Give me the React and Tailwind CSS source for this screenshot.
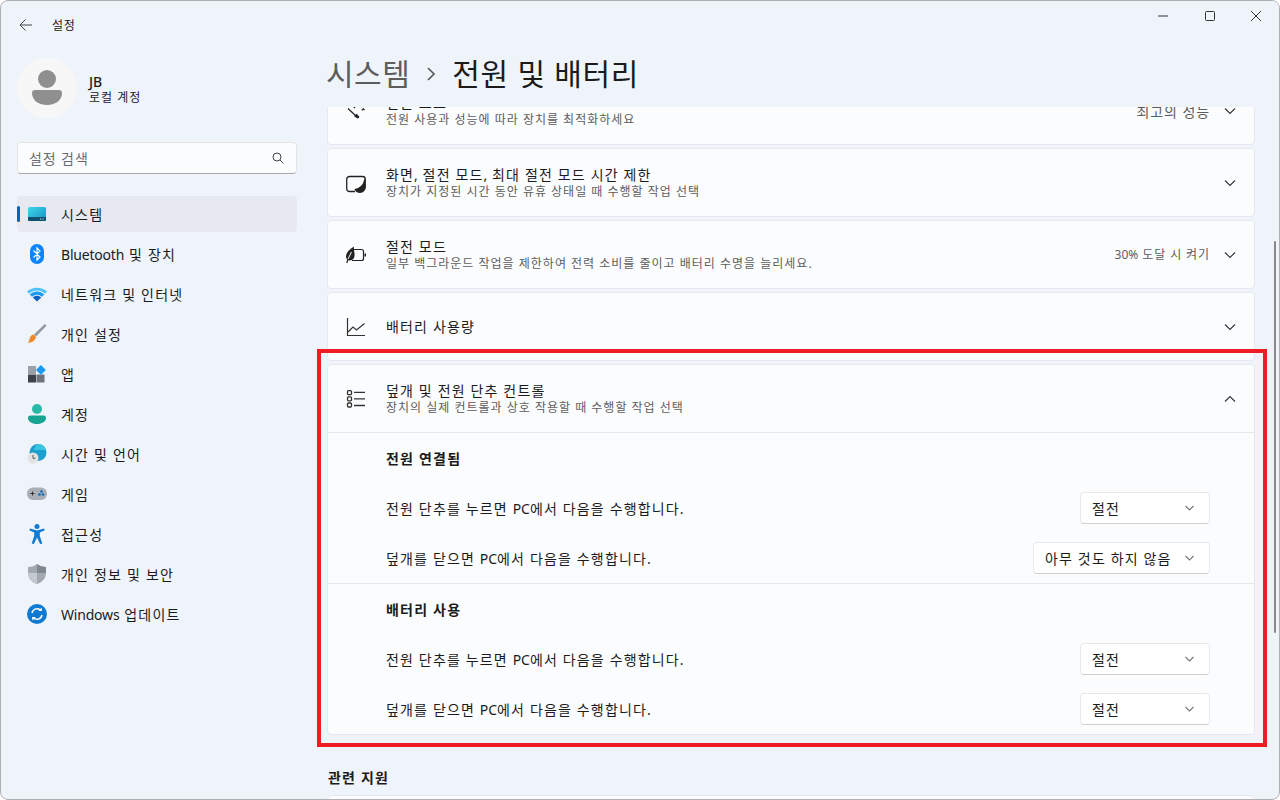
import React from "react";

const F = { fontFamily: '"Noto Sans","Noto Sans CJK KR",sans-serif' };

const K = ({ t, ko = 1.15, en = 0 }) => (
  <>
    {t.split(/([A-Za-z0-9%.,]+)/).filter(Boolean).map((s, i) => (
      <span key={i} style={{ letterSpacing: /^[A-Za-z0-9%.,]+$/.test(s) ? en + "px" : ko + "px" }}>{s}</span>
    ))}
  </>
);

const Chev = ({ up, cls = "text-[#333]" }) => (
  <svg width="12" height="8" viewBox="0 0 12 8" className={cls} fill="none" stroke="currentColor" strokeWidth="1.1">
    <path d={up ? "M1 6.500 6 1.500l5 5" : "M1 1.500 6 6.500l5-5"} />
  </svg>
);

const SmallChev = () => (
  <svg width="9" height="6" viewBox="0 0 9 6" fill="none" stroke="#777" strokeWidth="1.1">
    <path d="M.5 1 4.500 5l4-4" />
  </svg>
);

const Sys = () => (
  <svg width="20" height="16" viewBox="0 0 20 16">
    <defs><linearGradient id="sg" x1="0" y1="0" x2="1" y2="1"><stop offset="0" stopColor="#3fd6ea" /><stop offset="1" stopColor="#1a8fc4" /></linearGradient></defs>
    <rect x="1" y="1" width="18" height="14" rx="1.500" fill="url(#sg)" />
    <path d="M1 11h18v2.500a1.500 1.500 0 0 1-1.500 1.500h-15A1.500 1.500 0 0 1 1 13.500z" fill="#12506f" />
    <rect x="13" y="12.500" width="1.200" height="1" fill="#cde" /><rect x="15.500" y="12.500" width="1.200" height="1" fill="#cde" />
  </svg>
);
const Bt = () => (
  <svg width="20" height="20" viewBox="0 0 20 20">
    <rect x="3" y="0" width="14" height="20" rx="7" fill="#0a84ff" />
    <path d="M6.500 6.500 13 13l-3 3V4l3 3-6.500 6.500" fill="none" stroke="#fff" strokeWidth="1.200" />
  </svg>
);
const Wifi = () => (
  <svg width="20" height="16" viewBox="0 0 20 16">
    <path d="M0 5.500C5.500.5 14.500.5 20 5.500l-2 2.200C13 3.500 7 3.500 2 7.700z" fill="#4cc2ff" />
    <path d="M2.800 8.500C7 4.500 13 4.500 17.200 8.500l-2.200 2.300C12 8 8 8 5 10.800z" fill="#1a9bf0" />
    <path d="M5.800 11.500c2.500-2.300 5.900-2.300 8.400 0L10 15.500z" fill="#0a5fc4" />
  </svg>
);
const Brush = () => (
  <svg width="20" height="20" viewBox="0 0 20 20">
    <path d="M18.500 0.500c.8.500.8 1.300.3 2L9 12.500 7 10.500 17 .8c.5-.4 1-.6 1.500-.3z" fill="#8f9aa5" />
    <path d="M6.500 10.500 9 13c-.5 3-3.500 6-8.500 5.700 2-1 1.500-3 2.500-5.200.8-1.700 2-2.800 3.500-3z" fill="#ee8a2a" />
  </svg>
);
const Apps = () => (
  <svg width="18" height="18" viewBox="0 0 18 18">
    <rect x="0" y="1" width="8" height="8" fill="#9aa1a8" />
    <rect x="0" y="9.500" width="8" height="8" fill="#3d4248" />
    <rect x="8.500" y="9.500" width="8" height="8" fill="#6d747b" />
    <rect x="9.400" y="1.400" width="7" height="7" transform="rotate(45 12.900 4.900)" fill="#1a9bf0" />
  </svg>
);
const Acct = () => (
  <svg width="18" height="20" viewBox="0 0 18 20">
    <circle cx="9" cy="5" r="5" fill="#2bb8a8" />
    <path d="M0 14a2.500 2.500 0 0 1 2.500-2.500h13A2.500 2.500 0 0 1 18 14c0 3.500-4 6-9 6s-9-2.500-9-6z" fill="#16a392" />
  </svg>
);
const Time = () => (
  <svg width="20" height="20" viewBox="0 0 20 20">
    <circle cx="11" cy="8.500" r="8.500" fill="#1a9fd0" />
    <path d="M11 0a8.500 8.500 0 0 1 8 6H7C7.500 3 9 1 11 0z" fill="#3cc5e0" />
    <circle cx="6" cy="14" r="5.500" fill="#e2e2e2" />
    <path d="M6 11v3.300h2.300" fill="none" stroke="#555" strokeWidth="1" />
  </svg>
);
const Game = () => (
  <svg width="20" height="14" viewBox="0 0 20 14">
    <rect x="0" y="0.500" width="20" height="12.500" rx="6" fill="#a9afb6" />
    <path d="M3.500 6.500h4M5.500 4.500v4" stroke="#333" strokeWidth="1" />
    <circle cx="14.500" cy="4.500" r="1.300" fill="#0f6cbd" /><circle cx="12.500" cy="7.500" r="1.300" fill="#0f6cbd" /><circle cx="16" cy="7.500" r="1.300" fill="#0f6cbd" />
  </svg>
);
const Acc = () => (
  <svg width="16" height="20" viewBox="0 0 16 20">
    <circle cx="8" cy="2.500" r="2.500" fill="#0f7ad4" />
    <path d="M1 4.500 8 6.500l7-2 .7 1.800L10.800 8.500V12l2.500 7.500-2.200.500L8 13.500 4.900 20l-2.200-.500L5.200 12V8.500L.3 6.300z" fill="#0f7ad4" />
  </svg>
);
const Shield = () => (
  <svg width="18" height="20" viewBox="0 0 18 20">
    <path d="M9 0c2.500 2 5.500 3 9 3v6c0 5-3.500 9-9 11-5.500-2-9-6-9-11V3c3.500 0 6.500-1 9-3z" fill="#a2a9b0" />
    <path d="M9 0c2.500 2 5.500 3 9 3v6H9z" fill="#7f878f" />
    <path d="M0 9h9v11C3.500 18 0 14 0 9z" fill="#c4c9ce" />
  </svg>
);
const Upd = () => (
  <svg width="20" height="20" viewBox="0 0 20 20">
    <circle cx="10" cy="10" r="10" fill="#0f7ad4" />
    <path d="M5 9a5.200 5.200 0 0 1 9-2.500M15 11a5.200 5.200 0 0 1-9 2.500" fill="none" stroke="#fff" strokeWidth="1.400" />
    <path d="M14.800 3.500v3.500h-3.500zM5.200 16.500V13h3.500z" fill="#fff" />
  </svg>
);

const ToolIcon = () => (
  <svg width="20" height="20" viewBox="0 0 20 20" fill="none" stroke="#222" strokeWidth="1.200">
    <path d="M2 7.500 10.500 15.500" />
    <path d="M8 15.200 10.500 12.800 12.800 15c.6.600.6 1.400 0 2-.6.600-1.400.600-2 0z" fill="#222" stroke="none" />
    <path d="M15.800 9.200 17.300 7.800 18.500 9" />
    <path d="M3 1l6 6M13 3l3 3" />
  </svg>
);
const SleepIcon = () => (
  <svg width="20" height="20" viewBox="0 0 20 20" fill="none" stroke="#222" strokeWidth="1.300">
    <path d="M9 18.500H3.500a2.800 2.800 0 0 1-2.800-2.800V6.300a2.800 2.800 0 0 1 2.800-2.800h13a2.800 2.800 0 0 1 2.800 2.800v4" />
    <path d="M18 5.500c.3 5-3.500 9.500-9.500 10.500.5 2.500 3 4 5.500 4 3.500 0 6-3 6-7 0-3-.7-5.500-2-7.500z" fill="#222" stroke="none" />
  </svg>
);
const SaverIcon = () => (
  <svg width="20" height="20" viewBox="0 0 20 20" fill="none" stroke="#222" strokeWidth="1.200">
    <path d="M8 4.500h7.500a2 2 0 0 1 2 2v7a2 2 0 0 1-2 2H6" />
    <path d="M18.500 8.500H20v3h-1.500z" fill="#222" stroke="none" />
    <path d="M8 1.500C3 4.500 0 8 0 11.500c0 2.500 1.800 4 4 4 3.500 0 5-3.500 4.500-7-.3-2.500-.8-5-.5-7z" fill="#222" stroke="none" />
    <path d="M5.500 7 2 14" stroke="#fbfcfe" strokeWidth="1" />
    <path d="M2 14 .8 18" />
  </svg>
);
const ChartIcon = () => (
  <svg width="20" height="20" viewBox="0 0 20 20" fill="none" stroke="#333" strokeWidth="1.200">
    <path d="M1.500 1v17.500H19" />
    <path d="M2 15l5-5 3.500 3L18.500 6.500" />
  </svg>
);
const ListIcon = () => (
  <svg width="20" height="20" viewBox="0 0 20 20" fill="none" stroke="#333" strokeWidth="1.300">
    <rect x="1.500" y="1.700" width="4" height="4" rx="1" />
    <rect x="1.500" y="7.800" width="4" height="4" rx="1" />
    <rect x="1.500" y="14" width="4" height="4" rx="1" />
    <path d="M8 3.300h11M8 9.800h11M8 16.500h11" />
  </svg>
);

const nav = [
  [Sys, "시스템", true],
  [Bt, "Bluetooth 및 장치"],
  [Wifi, "네트워크 및 인터넷"],
  [Brush, "개인 설정"],
  [Apps, "앱"],
  [Acct, "계정"],
  [Time, "시간 및 언어"],
  [Game, "게임"],
  [Acc, "접근성"],
  [Shield, "개인 정보 및 보안"],
  [Upd, "Windows 업데이트"],
];

const Card = ({ className = "", children }) => (
  <div className={"shrink-0 rounded-[4px] border border-[#e5e8ee] bg-[#fbfcfe] " + className}>{children}</div>
);

const Row = ({ icon, title, sub, value, valueCls = "text-[12px]", up }) => (
  <div className="h-[67px] flex items-center pl-[18px] pr-[18px]">
    <div className="w-[20px] h-[20px] flex items-center justify-center">{icon}</div>
    <div className="ml-[20px] flex-1 flex flex-col">
      <div className="text-[14px] leading-[17px] text-[#1b1b1b]"><K t={title} /></div>
      {sub && <div className="text-[12px] leading-[14px] mt-[2px] text-[#5d5d5d]"><K t={sub} ko={1} /></div>}
    </div>
    {value && <div className={"text-[#5d5d5d] mr-[14px] " + valueCls}><K t={value} ko={0.9} /></div>}
    <Chev up={up} />
  </div>
);

const Select = ({ label, w = "w-[130px]" }) => (
  <div className={"h-[32px] flex items-center justify-between pl-[11px] pr-[15px] rounded-[4px] bg-white border border-[#e8e8e8] border-b-[#cfcfcf] " + w}>
    <span className="text-[14px] text-[#1b1b1b]"><K t={label} /></span>
    <SmallChev />
  </div>
);

const Opt = ({ text, label, w }) => (
  <div className="h-[50px] flex items-center justify-between pl-[58px] pr-[44px]">
    <span className="text-[14px] text-[#1b1b1b]"><K t={text} /></span>
    <Select label={label} w={w} />
  </div>
);

const Heading = ({ t }) => (
  <div className="h-[50px] flex items-center pl-[58px] text-[14px] font-semibold text-[#1b1b1b]"><K t={t} ko={1.2} /></div>
);

export default function App() {
  return (
    <div style={F} className="relative w-[1280px] h-[800px] overflow-hidden bg-[#eff3fa] border border-[#b0b0b0] rounded-[8px] text-[#1b1b1b]">
      <div className="flex h-full">
        <aside className="w-[316px] shrink-0 flex flex-col pl-[16px] pr-[20px]">
          <div className="h-[48px] flex items-center pl-[2px] shrink-0">
            <svg width="14" height="14" viewBox="0 0 14 14" fill="none" stroke="#444" strokeWidth="1"><path d="M13 7H1M6.500 1.500 1 7l5.500 5.500" /></svg>
            <span className="ml-[19px] mt-[1px] text-[12px]"><K t="설정" ko={0.8} /></span>
          </div>
          <div className="flex items-center mt-[9px]">
            <div className="w-[60px] h-[60px] rounded-full bg-[#f7f7f7] flex items-center justify-center">
              <svg width="30" height="36" viewBox="0 0 30 36">
                <circle cx="15" cy="9" r="9" fill="#8f8f8f" />
                <path d="M0 23a3 3 0 0 1 3-3h24a3 3 0 0 1 3 3c0 7-6 12-15 12S0 30 0 23z" fill="#8f8f8f" />
              </svg>
            </div>
            <div className="ml-[12px] pt-[4px] flex flex-col">
              <span className="text-[14px] leading-[16px] font-medium">JB</span>
              <span className="text-[12px] leading-[16px]"><K t="로컬 계정" ko={1} /></span>
            </div>
          </div>
          <div className="mt-[24px] h-[32px] w-[280px] flex items-center justify-between pl-[11px] pr-[12px] rounded-[4px] bg-[#fbfcfe] border border-[#e5e5e5] border-b-[#a8a8a8]">
            <span className="text-[14px] text-[#6b6b6b]"><K t="설정 검색" ko={0.9} /></span>
            <svg width="12" height="12" viewBox="0 0 12 12" fill="none" stroke="#444" strokeWidth="1"><circle cx="5" cy="5" r="4" /><path d="M8 8l3.500 3.500" /></svg>
          </div>
          <nav className="mt-[22px] flex flex-col w-[280px]">
            {nav.map(([I, t, active]) => (
              <div key={t} className={"relative h-[36px] mb-[4px] flex items-center rounded-[4px] " + (active ? "bg-[#e6eaf0]" : "")}>
                {active && <div className="absolute left-0 top-[10px] w-[3px] h-[16px] rounded-[2px] bg-[#0067c0]" />}
                <div className="ml-[10px] w-[20px] h-[20px] flex items-center justify-center"><I /></div>
                <span className="ml-[14px] text-[14px] text-[#1b1b1b]"><K t={t} ko={1.2} en={-0.2} /></span>
              </div>
            ))}
          </nav>
        </aside>
        <main className="flex-1 flex flex-col min-w-0">
          <div className="h-[106px] shrink-0 relative z-10 bg-[#eff3fa] flex items-center pl-[9px] pt-[38px]">
            <span className="text-[30px] text-[#5d5d5d]"><K t="시스템" ko={0.5} /></span>
            <svg className="ml-[17px] mr-[16px] mt-[2px]" width="9" height="14" viewBox="0 0 9 14" fill="none" stroke="#555" strokeWidth="1.600"><path d="M1 1l6 6-6 6" /></svg>
            <span className="text-[30px] text-[#1b1b1b]"><K t="전원 및 배터리" ko={0.7} /></span>
            <div className="absolute right-0 top-0 h-[30px] flex items-center">
              <div className="w-[46px] pr-[2px] flex justify-center"><svg width="10" height="10" viewBox="0 0 10 10"><path d="M0 5h10" stroke="#333" /></svg></div>
              <div className="w-[46px] flex justify-center"><svg width="10" height="10" viewBox="0 0 10 10"><rect x=".5" y=".5" width="9" height="9" rx="1" fill="none" stroke="#333" /></svg></div>
              <div className="w-[46px] flex justify-center"><svg width="10" height="10" viewBox="0 0 10 10"><path d="M0 0l10 10M10 0L0 10" stroke="#333" /></svg></div>
            </div>
          </div>
          <div className="flex-1 min-h-0 pl-[10px] pr-[24px] flex flex-col gap-[3px]">
            <Card className="-mt-[31px]">
              <Row icon={<ToolIcon />} title="전원 모드" sub="전원 사용과 성능에 따라 장치를 최적화하세요" value="최고의 성능" valueCls="text-[14px] mt-[1px]" />
            </Card>
            <Card>
              <Row icon={<SleepIcon />} title="화면, 절전 모드, 최대 절전 모드 시간 제한" sub="장치가 지정된 시간 동안 유휴 상태일 때 수행할 작업 선택" />
            </Card>
            <Card>
              <Row icon={<SaverIcon />} title="절전 모드" sub="일부 백그라운드 작업을 제한하여 전력 소비를 줄이고 배터리 수명을 늘리세요." value="30% 도달 시 켜기" />
            </Card>
            <Card>
              <Row icon={<ChartIcon />} title="배터리 사용량" />
            </Card>
            <Card>
              <Row icon={<ListIcon />} title="덮개 및 전원 단추 컨트롤" sub="장치의 실제 컨트롤과 상호 작용할 때 수행할 작업 선택" up />
              <div className="border-t border-[#e5e8ee]">
                <Heading t="전원 연결됨" />
                <Opt text="전원 단추를 누르면 PC에서 다음을 수행합니다." label="절전" />
                <Opt text="덮개를 닫으면 PC에서 다음을 수행합니다." label="아무 것도 하지 않음" w="w-[177px]" />
              </div>
              <div className="border-t border-[#e5e8ee]">
                <Heading t="배터리 사용" />
                <Opt text="전원 단추를 누르면 PC에서 다음을 수행합니다." label="절전" />
                <Opt text="덮개를 닫으면 PC에서 다음을 수행합니다." label="절전" />
              </div>
            </Card>
            <div className="mt-[29px] h-[20px] pl-[1px] shrink-0 flex items-center text-[14px] font-semibold"><K t="관련 지원" ko={1.2} /></div>
            <Card className="mt-[5px] h-[60px]" />
          </div>
        </main>
      </div>
      <div className="absolute left-[1273px] top-[240px] w-[2px] h-[392px] rounded-full bg-[#8a8a8a]" />
      <div className="absolute left-[316px] top-[348px] w-[950px] h-[398px] border-[4px] border-[#ee1c25] pointer-events-none z-20" />
    </div>
  );
}
